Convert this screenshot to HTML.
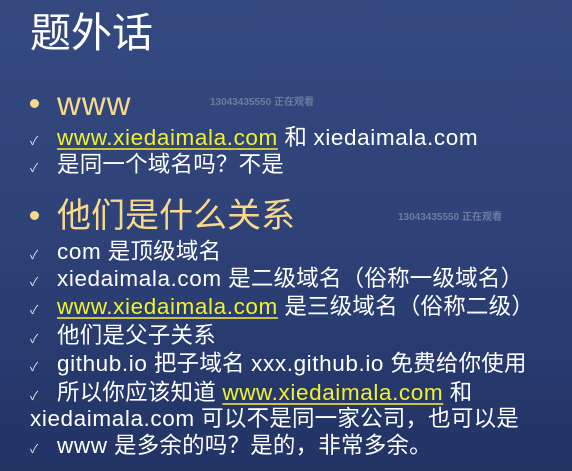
<!DOCTYPE html>
<html><head><meta charset="utf-8"><style>
body{margin:0;width:572px;height:471px;overflow:hidden;background:linear-gradient(180deg,#34497f 0%,#2e4278 50%,#223364 100%);font-family:"Liberation Sans","Noto Sans CJK SC",sans-serif;color:#fff;position:relative}
.l{position:absolute;left:57px;white-space:nowrap;font-size:22.5px;line-height:28px;letter-spacing:0.2px}
.e{letter-spacing:0.6px}
.c{position:absolute;left:30px;font-size:12px;color:#e8e8e8}
.h{color:#f8d98a;font-size:34px;line-height:38px;letter-spacing:0}
.hw{font-size:33px;letter-spacing:1px}
.b{position:absolute;left:30px;width:9px;height:9px;border-radius:50%;background:#f8d98a}
.y{color:#f2f22a;text-decoration:underline;text-decoration-color:#c9c23a;text-underline-offset:3px;letter-spacing:0.6px}
.w{position:absolute;font-size:10px;color:#6d7ca0;font-weight:bold}
</style></head><body>
<div style="position:absolute;left:30px;top:8px;font-size:41px;line-height:50px">题外话</div>
<div class="b" style="top:99px"></div><div class="l h hw" style="top:85px">www</div>
<div class="w" style="left:210px;top:93px">13043435550 正在观看</div>
<div class="c" style="top:132px">✓</div><div class="l" style="top:124px"><span class="y">www.xiedaimala.com</span> 和 <span class="e">xiedaimala.com</span></div>
<div class="c" style="top:159px">✓</div><div class="l" style="top:151px">是同一个域名吗？不是</div>
<div class="b" style="top:211px"></div><div class="l h" style="top:197px">他们是什么关系</div>
<div class="w" style="left:398px;top:208px">13043435550 正在观看</div>
<div class="c" style="top:246px">✓</div><div class="l" style="top:238px"><span class="e">com</span> 是顶级域名</div>
<div class="c" style="top:273px">✓</div><div class="l" style="top:265px"><span class="e">xiedaimala.com</span> 是二级域名（俗称一级域名）</div>
<div class="c" style="top:301px">✓</div><div class="l" style="top:293px"><span class="y">www.xiedaimala.com</span> 是三级域名（俗称二级）</div>
<div class="c" style="top:330px">✓</div><div class="l" style="top:322px">他们是父子关系</div>
<div class="c" style="top:358px">✓</div><div class="l" style="top:350px"><span class="e">github.io</span> 把子域名 <span class="e">xxx.github.io</span> 免费给你使用</div>
<div class="c" style="top:387px">✓</div><div class="l" style="top:379px">所以你应该知道 <span class="y">www.xiedaimala.com</span> 和</div>
<div class="l" style="top:405px;left:30px"><span class="e">xiedaimala.com</span> 可以不是同一家公司，也可以是</div>
<div class="c" style="top:440px">✓</div><div class="l" style="top:432px"><span class="e">www</span> 是多余的吗？是的，非常多余。</div>
</body></html>
